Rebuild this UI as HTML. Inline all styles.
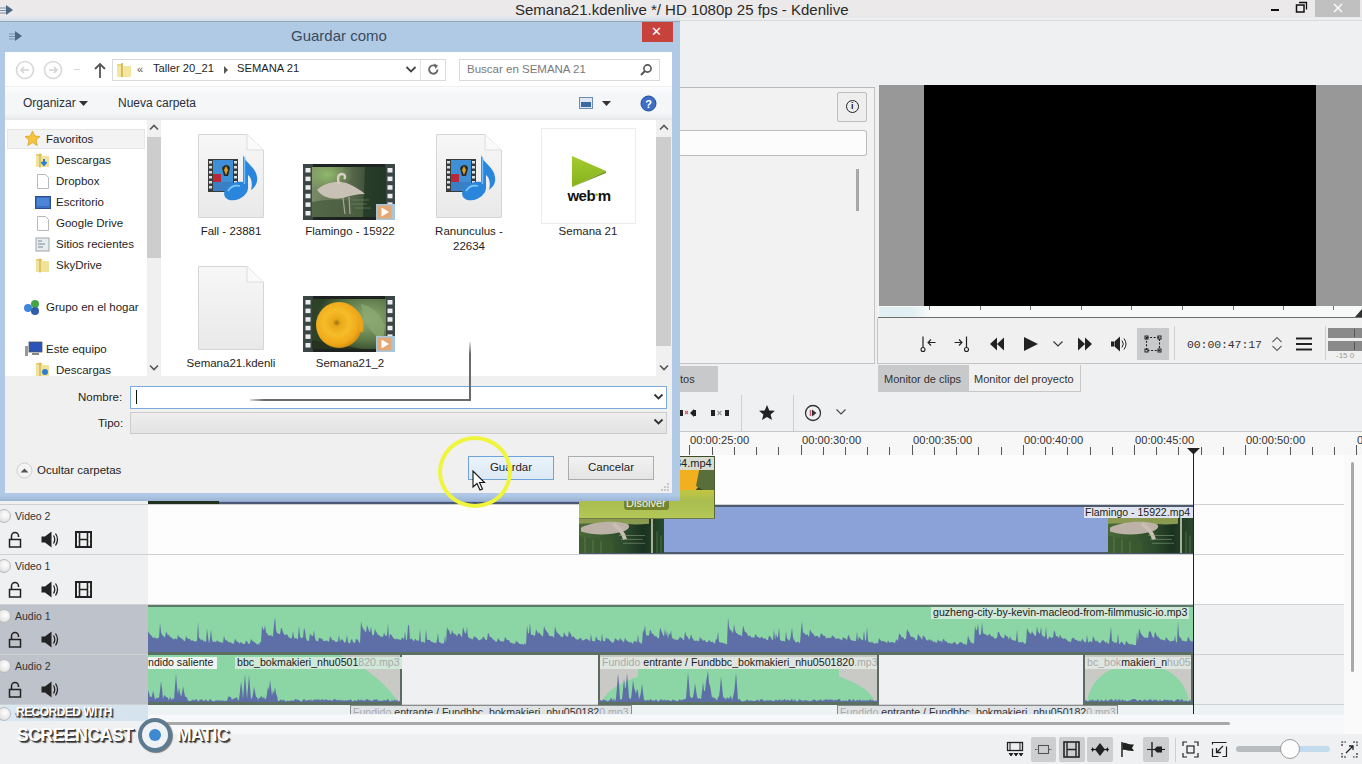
<!DOCTYPE html>
<html><head><meta charset="utf-8">
<style>
*{margin:0;padding:0;box-sizing:border-box}
html,body{width:1362px;height:764px;overflow:hidden;background:#eff0f1;font-family:"Liberation Sans",sans-serif;color:#222;position:relative}
.a{position:absolute}
.t{position:absolute;white-space:nowrap;line-height:1}
</style></head><body>

<!-- App title bar -->
<div class="a" style="left:0;top:0;width:1362px;height:21px;background:linear-gradient(#ebe9e9 16px,#e4e6e8 17px,#eceeef 18px,#eceeef 20px,#d8dadc 20px)"></div>
<div class="a" style="left:0;top:16px;width:680px;height:5px;background:linear-gradient(#e6eaee,#d2dce6)"></div>
<div class="t" style="left:515px;top:1.5px;font-size:15px;color:#2a2a2a">Semana21.kdenlive */ HD 1080p 25 fps - Kdenlive</div>
<!-- window controls -->
<div class="a" style="left:1271px;top:9px;width:8px;height:2px;background:#111"></div>
<svg class="a" style="left:1295px;top:1px" width="13" height="12" viewBox="0 0 13 12"><path d="M4 1.5H11.5V8.5" fill="none" stroke="#111" stroke-width="1.3"/><rect x="1.5" y="4" width="7.5" height="7" fill="#ebe9e9" stroke="#111" stroke-width="1.5"/></svg>
<div class="a" style="left:1315px;top:0;width:45px;height:17px;background:#c0c0c0"></div>
<svg class="a" style="left:1333px;top:3px" width="10" height="10"><path d="M1 1L9 9M9 1L1 9" stroke="#fff" stroke-width="1.3"/></svg>

<!-- ===== Kdenlive main ===== -->
<!-- left panel (project bin) -->
<div class="a" style="left:680px;top:87px;width:195px;height:277px;background:#f2f2f2;border-top:1px solid #b9b9b9;border-right:1px solid #c4c4c4;border-bottom:1px solid #c4c4c4"></div>
<div class="a" style="left:837px;top:92px;width:30px;height:30px;background:#eeeeee;border:1px solid #bdbdbd;border-radius:2px"></div>
<div class="a" style="left:846px;top:100px;width:13px;height:13px;border:1.3px solid #222;border-radius:50%"></div>
<div class="t" style="left:851px;top:102px;font-size:9px;font-weight:bold;color:#222">i</div>
<div class="a" style="left:680px;top:130px;width:187px;height:26px;background:#fcfcfc;border:1px solid #bcbcbc;border-left:none;border-radius:0 3px 3px 0"></div>
<div class="a" style="left:856px;top:169px;width:3px;height:42px;background:#a8a8a8"></div>

<!-- monitor -->
<div class="a" style="left:879px;top:85px;width:483px;height:221px;background:#989898"></div>
<div class="a" style="left:924px;top:85px;width:392px;height:221px;background:#000"></div>
<div class="a" style="left:878px;top:306px;width:484px;height:12px;background:#f7f8f8;border-bottom:1.5px solid #6e6e6e"></div>
<div class="a" style="left:879px;top:307px;width:48px;height:10px;background:linear-gradient(90deg,#e4eff2,#e0f0f3 70%,#f7f8f8)"></div>
<div class="a" style="left:877px;top:318px;width:485px;height:46px;background:#f0f0f0;border-left:1px solid #c4c4c4;border-bottom:1px solid #c4c4c4"></div>
<div class="a" style="left:929px;top:306px;width:1px;height:4px;background:#777"></div><div class="a" style="left:980px;top:306px;width:1px;height:4px;background:#777"></div><div class="a" style="left:1030px;top:306px;width:1px;height:4px;background:#777"></div><div class="a" style="left:1081px;top:306px;width:1px;height:4px;background:#777"></div><div class="a" style="left:1131px;top:306px;width:1px;height:4px;background:#777"></div><div class="a" style="left:1182px;top:306px;width:1px;height:4px;background:#777"></div><div class="a" style="left:1233px;top:306px;width:1px;height:4px;background:#777"></div><div class="a" style="left:1283px;top:306px;width:1px;height:4px;background:#777"></div><div class="a" style="left:1333px;top:306px;width:1px;height:4px;background:#777"></div>
<svg class="a" style="left:1355px;top:309px" width="7" height="8"><path d="M7 0V8H0z" fill="#333"/></svg>
<!-- monitor controls -->
<svg class="a" style="left:918px;top:334px" width="20" height="20" viewBox="0 0 20 20"><path d="M5 2.5V13.5" stroke="#222" stroke-width="1.2"/><circle cx="5" cy="15.5" r="2" fill="none" stroke="#222" stroke-width="1.1"/><path d="M17.5 8.5H10M13 5.5L10 8.5L13 11.5" fill="none" stroke="#222" stroke-width="1.1"/></svg>
<svg class="a" style="left:952px;top:334px" width="20" height="20" viewBox="0 0 20 20"><path d="M14.5 2.5V13.5" stroke="#222" stroke-width="1.2"/><circle cx="14.5" cy="15.5" r="2" fill="none" stroke="#222" stroke-width="1.1"/><path d="M2.5 8.5H10M7 5.5L10 8.5L7 11.5" fill="none" stroke="#222" stroke-width="1.1"/></svg>
<svg class="a" style="left:989px;top:336px" width="16" height="16" viewBox="0 0 16 16"><path d="M8 1.5L1 8L8 14.5zM15 1.5L8 8L15 14.5z" fill="#222"/></svg>
<svg class="a" style="left:1023px;top:336px" width="16" height="16" viewBox="0 0 16 16"><path d="M1 1V15L15 8z" fill="#222"/></svg>
<svg class="a" style="left:1052px;top:340px" width="12" height="8" viewBox="0 0 12 8"><path d="M1.5 1.5L6 6L10.5 1.5" fill="none" stroke="#333" stroke-width="1.1"/></svg>
<svg class="a" style="left:1077px;top:336px" width="16" height="16" viewBox="0 0 16 16"><path d="M1 1.5L8 8L1 14.5zM8 1.5L15 8L8 14.5z" fill="#222"/></svg>
<svg class="a" style="left:1110px;top:335px" width="18" height="18" viewBox="0 0 18 18"><path d="M1 6.5H4V11.5H1z" fill="#222"/><path d="M4.5 6.5L10 1.5V16.5L4.5 11.5z" fill="#222"/><path d="M12 5.5Q14.5 9 12 12.5M14 3.5Q18 9 14 14.5" fill="none" stroke="#222" stroke-width="1"/></svg>
<div class="a" style="left:1137px;top:328px;width:32px;height:32px;background:#c9cacb"></div>
<svg class="a" style="left:1144px;top:335px" width="18" height="18" viewBox="0 0 18 18"><rect x="2.5" y="2.5" width="13" height="13" fill="none" stroke="#222" stroke-width="1.1" stroke-dasharray="2 1.6"/><g fill="none" stroke="#222" stroke-width="1"><rect x="1" y="1" width="3" height="3"/><rect x="14" y="1" width="3" height="3"/><rect x="1" y="14" width="3" height="3"/><rect x="14" y="14" width="3" height="3"/></g></svg>
<div class="a" style="left:1174px;top:326px;width:1px;height:34px;background:#cfcfcf"></div>
<div class="t" style="left:1187px;top:339px;font-size:11.5px;font-family:'Liberation Mono',monospace;color:#333;letter-spacing:-0.1px">00:00:47:17</div>
<svg class="a" style="left:1271px;top:335px" width="12" height="18" viewBox="0 0 12 18"><path d="M1.5 7L6 2.5L10.5 7M1.5 11L6 15.5L10.5 11" fill="none" stroke="#666" stroke-width="1.1"/></svg>
<svg class="a" style="left:1295px;top:337px" width="18" height="14" viewBox="0 0 18 14"><path d="M1 1.5H17M1 7H17M1 12.5H17" stroke="#222" stroke-width="2"/></svg>
<div class="a" style="left:1325px;top:326px;width:1px;height:34px;background:#cfcfcf"></div>
<div class="a" style="left:1328px;top:328px;width:34px;height:10px;background:#8a8a8a"></div>
<div class="a" style="left:1328px;top:341px;width:34px;height:10px;background:#8a8a8a"></div>
<div class="a" style="left:1354px;top:329px;width:1px;height:8px;background:#555"></div>
<div class="a" style="left:1354px;top:342px;width:1px;height:8px;background:#555"></div>
<div class="t" style="left:1336px;top:352px;font-size:8px;color:#999">-15 0</div>



<!-- tabs -->
<div class="a" style="left:878px;top:365px;width:90px;height:27px;background:#c8c9ca"></div>
<div class="t" style="left:884px;top:374px;font-size:11px;color:#333">Monitor de clips</div>
<div class="a" style="left:968px;top:365px;width:113px;height:27px;background:#f0f0f0;border:1px solid #c8c8c8;border-top:none"></div>
<div class="t" style="left:974px;top:374px;font-size:11px;color:#333">Monitor del proyecto</div>
<div class="a" style="left:672px;top:366px;width:46px;height:26px;background:#c8c9ca"></div>
<div class="t" style="left:680px;top:374px;font-size:11px;color:#333">tos</div>

<!-- timeline toolbar -->
<div class="a" style="left:680px;top:431px;width:682px;height:1px;background:#c9c9c9"></div>
<div class="a" style="left:741px;top:395px;width:1px;height:36px;background:#d0d0d0"></div>
<div class="a" style="left:793px;top:395px;width:1px;height:36px;background:#d0d0d0"></div>

<!-- ruler -->
<div class="a" style="left:148px;top:432px;width:1214px;height:23px;background:#f7f7f7"></div>

<!-- timeline toolbar icons -->
<svg class="a" style="left:680px;top:406px" width="20" height="14" viewBox="0 0 20 14"><path d="M0 4h3v6H0z" fill="#222"/><path d="M5 5L8 8M8 5L5 8" stroke="#d05a6a" stroke-width="1.1"/><path d="M10 7L14 3V11z" fill="#222"/><path d="M13 4h3v6h-3z" fill="#222"/></svg>
<svg class="a" style="left:710px;top:406px" width="20" height="14" viewBox="0 0 20 14"><path d="M1 4h4v6H1zM15 4h4v6h-4z" fill="#222"/><path d="M7.5 5L11.5 9M11.5 5L7.5 9" stroke="#999" stroke-width="1.1"/></svg>
<svg class="a" style="left:758px;top:404px" width="18" height="18" viewBox="0 0 18 18"><path d="M9 1L11.3 6.5L17 6.8L12.6 10.4L14 16L9 12.9L4 16L5.4 10.4L1 6.8L6.7 6.5z" fill="#222"/></svg>
<svg class="a" style="left:804px;top:404px" width="18" height="18" viewBox="0 0 18 18"><circle cx="9" cy="9" r="7.5" fill="none" stroke="#333" stroke-width="1.3"/><path d="M6.5 6V12" stroke="#d05a7a" stroke-width="1.6"/><path d="M8 5.5L12.5 9L8 12.5z" fill="#333"/></svg>
<svg class="a" style="left:835px;top:408px" width="12" height="8" viewBox="0 0 12 8"><path d="M1.5 1.5L6 6L10.5 1.5" fill="none" stroke="#444" stroke-width="1.1"/></svg>
<div class="t" style="left:690px;top:435px;font-size:11.2px;color:#333">00:00:25:00</div><div class="t" style="left:802px;top:435px;font-size:11.2px;color:#333">00:00:30:00</div><div class="t" style="left:913px;top:435px;font-size:11.2px;color:#333">00:00:35:00</div><div class="t" style="left:1024px;top:435px;font-size:11.2px;color:#333">00:00:40:00</div><div class="t" style="left:1135px;top:435px;font-size:11.2px;color:#333">00:00:45:00</div><div class="t" style="left:1246px;top:435px;font-size:11.2px;color:#333">00:00:50:00</div><div class="t" style="left:1357px;top:435px;font-size:11.2px;color:#333">00:00:55:00</div><div class="a" style="left:156px;top:447px;width:1px;height:8px;background:#555"></div><div class="a" style="left:178px;top:447px;width:1px;height:8px;background:#555"></div><div class="a" style="left:200px;top:447px;width:1px;height:8px;background:#555"></div><div class="a" style="left:223px;top:447px;width:1px;height:8px;background:#555"></div><div class="a" style="left:245px;top:445px;width:1px;height:10px;background:#555"></div><div class="a" style="left:267px;top:447px;width:1px;height:8px;background:#555"></div><div class="a" style="left:289px;top:447px;width:1px;height:8px;background:#555"></div><div class="a" style="left:311px;top:447px;width:1px;height:8px;background:#555"></div><div class="a" style="left:334px;top:447px;width:1px;height:8px;background:#555"></div><div class="a" style="left:356px;top:445px;width:1px;height:10px;background:#555"></div><div class="a" style="left:378px;top:447px;width:1px;height:8px;background:#555"></div><div class="a" style="left:400px;top:447px;width:1px;height:8px;background:#555"></div><div class="a" style="left:423px;top:447px;width:1px;height:8px;background:#555"></div><div class="a" style="left:445px;top:447px;width:1px;height:8px;background:#555"></div><div class="a" style="left:467px;top:445px;width:1px;height:10px;background:#555"></div><div class="a" style="left:489px;top:447px;width:1px;height:8px;background:#555"></div><div class="a" style="left:512px;top:447px;width:1px;height:8px;background:#555"></div><div class="a" style="left:534px;top:447px;width:1px;height:8px;background:#555"></div><div class="a" style="left:556px;top:447px;width:1px;height:8px;background:#555"></div><div class="a" style="left:578px;top:445px;width:1px;height:10px;background:#555"></div><div class="a" style="left:600px;top:447px;width:1px;height:8px;background:#555"></div><div class="a" style="left:623px;top:447px;width:1px;height:8px;background:#555"></div><div class="a" style="left:645px;top:447px;width:1px;height:8px;background:#555"></div><div class="a" style="left:667px;top:447px;width:1px;height:8px;background:#555"></div><div class="a" style="left:689px;top:445px;width:1px;height:10px;background:#555"></div><div class="a" style="left:712px;top:447px;width:1px;height:8px;background:#555"></div><div class="a" style="left:734px;top:447px;width:1px;height:8px;background:#555"></div><div class="a" style="left:756px;top:447px;width:1px;height:8px;background:#555"></div><div class="a" style="left:778px;top:447px;width:1px;height:8px;background:#555"></div><div class="a" style="left:801px;top:445px;width:1px;height:10px;background:#555"></div><div class="a" style="left:823px;top:447px;width:1px;height:8px;background:#555"></div><div class="a" style="left:845px;top:447px;width:1px;height:8px;background:#555"></div><div class="a" style="left:867px;top:447px;width:1px;height:8px;background:#555"></div><div class="a" style="left:889px;top:447px;width:1px;height:8px;background:#555"></div><div class="a" style="left:912px;top:445px;width:1px;height:10px;background:#555"></div><div class="a" style="left:934px;top:447px;width:1px;height:8px;background:#555"></div><div class="a" style="left:956px;top:447px;width:1px;height:8px;background:#555"></div><div class="a" style="left:978px;top:447px;width:1px;height:8px;background:#555"></div><div class="a" style="left:1001px;top:447px;width:1px;height:8px;background:#555"></div><div class="a" style="left:1023px;top:445px;width:1px;height:10px;background:#555"></div><div class="a" style="left:1045px;top:447px;width:1px;height:8px;background:#555"></div><div class="a" style="left:1067px;top:447px;width:1px;height:8px;background:#555"></div><div class="a" style="left:1090px;top:447px;width:1px;height:8px;background:#555"></div><div class="a" style="left:1112px;top:447px;width:1px;height:8px;background:#555"></div><div class="a" style="left:1134px;top:445px;width:1px;height:10px;background:#555"></div><div class="a" style="left:1156px;top:447px;width:1px;height:8px;background:#555"></div><div class="a" style="left:1178px;top:447px;width:1px;height:8px;background:#555"></div><div class="a" style="left:1201px;top:447px;width:1px;height:8px;background:#555"></div><div class="a" style="left:1223px;top:447px;width:1px;height:8px;background:#555"></div><div class="a" style="left:1245px;top:445px;width:1px;height:10px;background:#555"></div><div class="a" style="left:1267px;top:447px;width:1px;height:8px;background:#555"></div><div class="a" style="left:1290px;top:447px;width:1px;height:8px;background:#555"></div><div class="a" style="left:1312px;top:447px;width:1px;height:8px;background:#555"></div><div class="a" style="left:1334px;top:447px;width:1px;height:8px;background:#555"></div><div class="a" style="left:1356px;top:445px;width:1px;height:10px;background:#555"></div>

<!-- tracks -->
<div class="a" style="left:0;top:455px;width:148px;height:150px;background:#eff0f1"></div>
<div class="a" style="left:0;top:605px;width:148px;height:100px;background:#bec2ca"></div>
<div class="a" style="left:0;top:705px;width:148px;height:16px;background:linear-gradient(90deg,#dbe8f2,#d4e3ee)"></div>
<div class="a" style="left:148px;top:455px;width:1196px;height:150px;background:#fdfdfd"></div>
<div class="a" style="left:148px;top:605px;width:1196px;height:100px;background:#eef0f1"></div>
<div class="a" style="left:148px;top:705px;width:1196px;height:10px;background:#edf2f4"></div>
<div class="a" style="left:148px;top:715px;width:1196px;height:19px;background:#f7f8f9"></div>
<div class="a" style="left:1344px;top:455px;width:18px;height:279px;background:#fafafa"></div>
<div class="a" style="left:0;top:504px;width:1344px;height:1px;background:#cfd0d2"></div>
<div class="a" style="left:0;top:554px;width:1344px;height:1px;background:#cfd0d2"></div>
<div class="a" style="left:0;top:604px;width:1344px;height:1px;background:#cfd0d2"></div>
<div class="a" style="left:0;top:654px;width:1344px;height:1px;background:#cfd0d2"></div>
<div class="a" style="left:0;top:704px;width:1344px;height:1px;background:#cfd0d2"></div>
<div class="a" style="left:-3px;top:509px;width:14px;height:14px;border-radius:50%;background:radial-gradient(circle at 60% 40%,#ffffff,#e6e6e6 60%,#c8c8c8);border:1px solid #bbb"></div>
<div class="t" style="left:15px;top:511px;font-size:10.5px;color:#333">Video 2</div>
<svg class="a" style="left:8px;top:531px" width="14" height="17" viewBox="0 0 14 17"><path d="M3.5 8.5V5A3.5 3.5 0 0 1 10.5 5V6" fill="none" stroke="#222" stroke-width="1.5"/><rect x="1.5" y="8.5" width="11" height="7.5" fill="none" stroke="#222" stroke-width="1.5"/></svg>
<svg class="a" style="left:41px;top:531px" width="18" height="17" viewBox="0 0 18 17"><path d="M0.5 5.5H4V11.5H0.5z" fill="#222"/><path d="M4 5.5L10.5 0.5V16.5L4 11.5z" fill="#222"/><path d="M12.5 4.5Q15 8.5 12.5 12.5M14.5 2.5Q18.5 8.5 14.5 14.5" fill="none" stroke="#222" stroke-width="1.3"/></svg>
<svg class="a" style="left:75px;top:531px" width="17" height="17" viewBox="0 0 17 17"><rect x="1" y="1" width="15" height="15" fill="none" stroke="#222" stroke-width="2"/><path d="M4.5 1.5V15.5M12.5 1.5V15.5M4.5 8.5H12.5" stroke="#222" stroke-width="1.6"/><g fill="#fff"><rect x="2" y="3" width="1.3" height="1.5"/><rect x="2" y="7.5" width="1.3" height="1.5"/><rect x="2" y="12" width="1.3" height="1.5"/><rect x="13.8" y="3" width="1.3" height="1.5"/><rect x="13.8" y="7.5" width="1.3" height="1.5"/><rect x="13.8" y="12" width="1.3" height="1.5"/></g></svg>
<div class="a" style="left:-3px;top:559px;width:14px;height:14px;border-radius:50%;background:radial-gradient(circle at 60% 40%,#ffffff,#e6e6e6 60%,#c8c8c8);border:1px solid #bbb"></div>
<div class="t" style="left:15px;top:561px;font-size:10.5px;color:#333">Video 1</div>
<svg class="a" style="left:8px;top:581px" width="14" height="17" viewBox="0 0 14 17"><path d="M3.5 8.5V5A3.5 3.5 0 0 1 10.5 5V6" fill="none" stroke="#222" stroke-width="1.5"/><rect x="1.5" y="8.5" width="11" height="7.5" fill="none" stroke="#222" stroke-width="1.5"/></svg>
<svg class="a" style="left:41px;top:581px" width="18" height="17" viewBox="0 0 18 17"><path d="M0.5 5.5H4V11.5H0.5z" fill="#222"/><path d="M4 5.5L10.5 0.5V16.5L4 11.5z" fill="#222"/><path d="M12.5 4.5Q15 8.5 12.5 12.5M14.5 2.5Q18.5 8.5 14.5 14.5" fill="none" stroke="#222" stroke-width="1.3"/></svg>
<svg class="a" style="left:75px;top:581px" width="17" height="17" viewBox="0 0 17 17"><rect x="1" y="1" width="15" height="15" fill="none" stroke="#222" stroke-width="2"/><path d="M4.5 1.5V15.5M12.5 1.5V15.5M4.5 8.5H12.5" stroke="#222" stroke-width="1.6"/><g fill="#fff"><rect x="2" y="3" width="1.3" height="1.5"/><rect x="2" y="7.5" width="1.3" height="1.5"/><rect x="2" y="12" width="1.3" height="1.5"/><rect x="13.8" y="3" width="1.3" height="1.5"/><rect x="13.8" y="7.5" width="1.3" height="1.5"/><rect x="13.8" y="12" width="1.3" height="1.5"/></g></svg>
<div class="a" style="left:-3px;top:609px;width:14px;height:14px;border-radius:50%;background:radial-gradient(circle at 60% 40%,#ffffff,#e6e6e6 60%,#c8c8c8);border:1px solid #bbb"></div>
<div class="t" style="left:15px;top:611px;font-size:10.5px;color:#333">Audio 1</div>
<svg class="a" style="left:8px;top:631px" width="14" height="17" viewBox="0 0 14 17"><path d="M3.5 8.5V5A3.5 3.5 0 0 1 10.5 5V6" fill="none" stroke="#222" stroke-width="1.5"/><rect x="1.5" y="8.5" width="11" height="7.5" fill="none" stroke="#222" stroke-width="1.5"/></svg>
<svg class="a" style="left:41px;top:631px" width="18" height="17" viewBox="0 0 18 17"><path d="M0.5 5.5H4V11.5H0.5z" fill="#222"/><path d="M4 5.5L10.5 0.5V16.5L4 11.5z" fill="#222"/><path d="M12.5 4.5Q15 8.5 12.5 12.5M14.5 2.5Q18.5 8.5 14.5 14.5" fill="none" stroke="#222" stroke-width="1.3"/></svg>
<div class="a" style="left:-3px;top:659px;width:14px;height:14px;border-radius:50%;background:radial-gradient(circle at 60% 40%,#ffffff,#e6e6e6 60%,#c8c8c8);border:1px solid #bbb"></div>
<div class="t" style="left:15px;top:661px;font-size:10.5px;color:#333">Audio 2</div>
<svg class="a" style="left:8px;top:681px" width="14" height="17" viewBox="0 0 14 17"><path d="M3.5 8.5V5A3.5 3.5 0 0 1 10.5 5V6" fill="none" stroke="#222" stroke-width="1.5"/><rect x="1.5" y="8.5" width="11" height="7.5" fill="none" stroke="#222" stroke-width="1.5"/></svg>
<svg class="a" style="left:41px;top:681px" width="18" height="17" viewBox="0 0 18 17"><path d="M0.5 5.5H4V11.5H0.5z" fill="#222"/><path d="M4 5.5L10.5 0.5V16.5L4 11.5z" fill="#222"/><path d="M12.5 4.5Q15 8.5 12.5 12.5M14.5 2.5Q18.5 8.5 14.5 14.5" fill="none" stroke="#222" stroke-width="1.3"/></svg>
<div class="a" style="left:-3px;top:707px;width:14px;height:14px;border-radius:50%;background:radial-gradient(circle at 60% 40%,#ffffff,#e6e6e6 60%,#c8c8c8);border:1px solid #bbb"></div>
<div class="t" style="left:15px;top:712px;font-size:10.5px;color:#777;height:6px;overflow:hidden">Video</div>
<div class="a" style="left:148px;top:456px;width:566px;height:48px;background:#8fa5d5;border-bottom:2px solid #4a5872"></div>
<div class="a" style="left:148px;top:456px;width:71px;height:48px;background:#22301f"></div>
<svg class="a" style="left:630px;top:456px" width="84" height="48" viewBox="0 0 84 48" preserveAspectRatio="none"><rect width="84" height="48" fill="#3d4a2a"/><path d="M40 0H84V48H30z" fill="#3b4b24"/><circle cx="55" cy="22" r="16" fill="#f2b020"/><path d="M70 10L84 4V40L66 30z" fill="#5a6e3a"/></svg>
<div class="t" style="left:672px;top:457px;height:13px;padding:1px 2px 0 3px;font-size:11px;color:#222;background:#d8dcd2">34.mp4</div>
<div class="a" style="left:714px;top:456px;width:1px;height:48px;background:#4a5a3a"></div>
<div class="a" style="left:579px;top:505px;width:614px;height:49px;background:#8ba2d8;border-top:2px solid #4e5a6e;border-bottom:2px solid #4e5a6e"></div>
<svg class="a" style="left:579px;top:518px" width="85" height="35" viewBox="0 0 85 36" preserveAspectRatio="none"><defs><linearGradient id="vt579" x1="0" y1="0" x2="1" y2="0"><stop offset="0" stop-color="#4a6a3a"/><stop offset="0.55" stop-color="#2c4a2c"/><stop offset="0.75" stop-color="#1a3220"/><stop offset="1" stop-color="#2a4a2c"/></linearGradient></defs><rect width="85" height="36" fill="url(#vt579)"/><path d="M0 0H70V6C50 8 30 4 0 6z" fill="#8a9a50"/><path d="M2 10C12 4 34 2 48 6C52 8 50 12 44 14C30 18 14 18 2 14z" fill="#bcb2a8"/><path d="M34 6C40 10 44 14 46 22" stroke="#c8beb2" stroke-width="4" fill="none"/><path d="M0 18C10 22 20 20 34 24V36H0z" fill="#3c5a30" opacity="0.8"/><g stroke="#a4b494" stroke-width="0.8" opacity="0.6"><path d="M40 18H66M42 22H64M44 26H66"/></g><path d="M73 0V36" stroke="#b8c0a0" stroke-width="1.8"/><g stroke="#7a9a6a" stroke-width="0.7" opacity="0.7"><path d="M6 20V36M14 22V36M22 24V36M78 14V36M82 18V36"/></g></svg>
<svg class="a" style="left:1108px;top:518px" width="85" height="35" viewBox="0 0 85 36" preserveAspectRatio="none"><defs><linearGradient id="vt1108" x1="0" y1="0" x2="1" y2="0"><stop offset="0" stop-color="#4a6a3a"/><stop offset="0.55" stop-color="#2c4a2c"/><stop offset="0.75" stop-color="#1a3220"/><stop offset="1" stop-color="#2a4a2c"/></linearGradient></defs><rect width="85" height="36" fill="url(#vt1108)"/><path d="M0 0H70V6C50 8 30 4 0 6z" fill="#8a9a50"/><path d="M2 10C12 4 34 2 48 6C52 8 50 12 44 14C30 18 14 18 2 14z" fill="#bcb2a8"/><path d="M34 6C40 10 44 14 46 22" stroke="#c8beb2" stroke-width="4" fill="none"/><path d="M0 18C10 22 20 20 34 24V36H0z" fill="#3c5a30" opacity="0.8"/><g stroke="#a4b494" stroke-width="0.8" opacity="0.6"><path d="M40 18H66M42 22H64M44 26H66"/></g><path d="M73 0V36" stroke="#b8c0a0" stroke-width="1.8"/><g stroke="#7a9a6a" stroke-width="0.7" opacity="0.7"><path d="M6 20V36M14 22V36M22 24V36M78 14V36M82 18V36"/></g></svg>
<div class="a" style="left:1084px;top:507px;width:109px;height:11px;background:#dfe4ee"></div><div class="t" style="left:1085px;top:507px;font-size:10.5px;color:#222">Flamingo - 15922.mp4</div>
<div class="a" style="left:579px;top:490px;width:136px;height:29px;background:linear-gradient(#c2c640,#a9bd50 40%,#b4c858);border-bottom:1px solid #6f7a4a;border-right:1px solid #5a6a3a"></div>
<div class="t" style="left:624px;top:497px;height:13px;padding:1px 3px 0 2px;font-size:11px;color:#f4f4e8;background:#75852e;border-radius:0 0 3px 3px">Disolver</div>
<div class="a" style="left:148px;top:605px;width:1045px;height:50px;background:#8cd5a5;border-top:2px solid #5c7a6a"></div>
<svg class="a" style="left:148px;top:607px" width="1045" height="48"><path d="M0 46.0 L0 24.3 L1 26.0 L2 27.5 L3 28.3 L4 29.4 L5 31.0 L6 30.4 L7 30.2 L8 31.7 L9 31.2 L10 31.1 L11 30.8 L12 15.8 L13 25.2 L14 27.5 L15 29.3 L16 29.2 L17 30.8 L18 24.9 L19 26.0 L20 28.6 L21 27.8 L22 30.2 L23 29.7 L24 31.2 L25 31.8 L26 32.6 L27 31.5 L28 31.6 L29 32.8 L30 27.3 L31 30.6 L32 29.8 L33 31.6 L34 31.7 L35 32.4 L36 33.9 L37 34.2 L38 28.7 L39 30.9 L40 31.4 L41 32.3 L42 31.8 L43 33.9 L44 33.0 L45 33.8 L46 34.3 L47 34.6 L48 34.0 L49 34.5 L50 14.5 L51 31.5 L52 30.9 L53 33.7 L54 32.3 L55 33.1 L56 34.9 L57 33.6 L58 35.7 L59 21.2 L60 29.4 L61 36.4 L62 32.0 L63 22.1 L64 32.6 L65 35.1 L66 34.7 L67 34.5 L68 35.2 L69 33.1 L70 34.6 L71 34.4 L72 35.4 L73 34.7 L74 35.9 L75 35.4 L76 28.8 L77 32.6 L78 33.3 L79 33.8 L80 34.6 L81 35.7 L82 35.0 L83 35.4 L84 36.6 L85 36.6 L86 36.5 L87 31.4 L88 33.3 L89 34.9 L90 34.2 L91 36.5 L92 35.9 L93 35.1 L94 36.1 L95 36.9 L96 37.0 L97 36.7 L98 33.5 L99 34.6 L100 36.0 L101 37.3 L102 36.3 L103 31.8 L104 33.6 L105 34.6 L106 34.6 L107 36.1 L108 36.1 L109 38.0 L110 36.5 L111 38.1 L112 35.0 L113 35.0 L114 19.0 L115 22.1 L116 23.2 L117 17.9 L118 25.6 L119 26.1 L120 28.2 L121 28.6 L122 29.0 L123 27.5 L124 29.8 L125 28.7 L126 17.6 L127 10.0 L128 23.0 L129 26.0 L130 26.6 L131 26.8 L132 27.3 L133 21.0 L134 21.4 L135 25.4 L136 27.0 L137 28.2 L138 27.7 L139 26.9 L140 28.9 L141 30.5 L142 30.7 L143 31.7 L144 30.4 L145 23.9 L146 30.5 L147 32.0 L148 30.6 L149 32.6 L150 31.2 L151 18.7 L152 29.3 L153 31.1 L154 31.0 L155 30.6 L156 20.9 L157 23.4 L158 31.4 L159 33.4 L160 33.7 L161 34.0 L162 25.9 L163 28.6 L164 28.4 L165 29.4 L166 23.3 L167 30.9 L168 33.7 L169 34.1 L170 34.4 L171 30.8 L172 30.9 L173 31.7 L174 31.5 L175 33.4 L176 33.9 L177 34.1 L178 33.8 L179 33.2 L180 34.8 L181 34.6 L182 29.5 L183 30.6 L184 32.7 L185 33.6 L186 33.0 L187 34.4 L188 35.0 L189 34.9 L190 34.1 L191 27.7 L192 34.9 L193 32.4 L194 32.2 L195 33.2 L196 35.3 L197 35.8 L198 34.2 L199 27.5 L200 35.0 L201 36.3 L202 36.2 L203 32.8 L204 32.1 L205 35.0 L206 35.8 L207 36.1 L208 31.9 L209 32.2 L210 33.2 L211 35.0 L212 36.6 L213 14.2 L214 19.0 L215 21.3 L216 23.0 L217 23.9 L218 25.6 L219 18.1 L220 20.9 L221 23.9 L222 25.2 L223 19.5 L224 26.9 L225 28.8 L226 27.5 L227 21.7 L228 24.8 L229 26.1 L230 27.9 L231 28.0 L232 29.2 L233 30.1 L234 29.0 L235 30.4 L236 25.2 L237 28.3 L238 28.9 L239 28.3 L240 16.3 L241 31.9 L242 27.0 L243 27.4 L244 28.8 L245 30.5 L246 31.7 L247 31.9 L248 32.5 L249 31.0 L250 33.1 L251 31.8 L252 33.1 L253 32.7 L254 30.5 L255 31.3 L256 32.6 L257 24.6 L258 33.2 L259 32.6 L260 18.6 L261 17.9 L262 32.8 L263 31.6 L264 31.7 L265 33.2 L266 34.4 L267 31.4 L268 32.8 L269 33.7 L270 33.6 L271 33.7 L272 21.8 L273 35.6 L274 34.8 L275 34.5 L276 35.5 L277 35.8 L278 22.0 L279 32.7 L280 32.8 L281 32.9 L282 33.0 L283 35.0 L284 34.6 L285 35.6 L286 36.1 L287 35.6 L288 36.4 L289 33.2 L290 25.6 L291 35.4 L292 35.1 L293 36.2 L294 37.0 L295 35.6 L296 37.1 L297 28.3 L298 36.2 L299 20.0 L300 22.7 L301 23.0 L302 26.7 L303 27.8 L304 22.8 L305 26.0 L306 26.5 L307 27.4 L308 27.6 L309 29.8 L310 27.1 L311 26.5 L312 27.2 L313 29.3 L314 29.9 L315 20.1 L316 23.2 L317 26.2 L318 26.6 L319 20.1 L320 30.1 L321 30.6 L322 31.7 L323 31.2 L324 32.4 L325 32.1 L326 29.0 L327 30.1 L328 30.5 L329 30.7 L330 32.8 L331 33.0 L332 33.6 L333 31.9 L334 32.3 L335 29.6 L336 30.3 L337 32.2 L338 33.0 L339 33.1 L340 25.4 L341 27.5 L342 30.3 L343 29.9 L344 31.2 L345 32.5 L346 33.1 L347 33.7 L348 35.2 L349 34.3 L350 31.0 L351 32.6 L352 33.7 L353 34.6 L354 34.2 L355 34.5 L356 34.4 L357 30.0 L358 31.6 L359 33.0 L360 33.2 L361 32.9 L362 35.4 L363 35.8 L364 36.0 L365 36.7 L366 36.0 L367 37.4 L368 33.3 L369 34.9 L370 35.3 L371 36.6 L372 37.1 L373 37.3 L374 36.8 L375 38.0 L376 37.3 L377 36.1 L378 38.2 L379 18.2 L380 26.0 L381 26.5 L382 15.8 L383 27.7 L384 28.1 L385 27.4 L386 28.9 L387 28.8 L388 22.4 L389 24.2 L390 26.2 L391 25.5 L392 26.6 L393 28.1 L394 28.7 L395 29.8 L396 18.5 L397 22.2 L398 23.6 L399 24.7 L400 26.0 L401 28.4 L402 29.2 L403 29.0 L404 29.5 L405 29.3 L406 31.0 L407 19.3 L408 23.2 L409 25.4 L410 26.2 L411 27.4 L412 28.1 L413 30.3 L414 29.3 L415 30.8 L416 25.0 L417 27.4 L418 28.9 L419 29.2 L420 30.2 L421 23.7 L422 26.1 L423 27.2 L424 30.3 L425 29.2 L426 30.1 L427 30.9 L428 32.6 L429 31.9 L430 33.3 L431 31.4 L432 31.8 L433 30.8 L434 33.2 L435 33.6 L436 33.1 L437 32.6 L438 31.8 L439 31.8 L440 32.7 L441 33.4 L442 34.3 L443 27.1 L444 33.8 L445 34.0 L446 34.2 L447 34.6 L448 29.2 L449 31.3 L450 32.9 L451 33.1 L452 33.8 L453 34.7 L454 26.3 L455 34.1 L456 34.1 L457 34.6 L458 29.7 L459 31.9 L460 31.4 L461 32.2 L462 33.7 L463 34.5 L464 35.5 L465 35.8 L466 34.7 L467 31.3 L468 31.9 L469 33.0 L470 33.6 L471 33.8 L472 31.1 L473 32.4 L474 33.6 L475 34.6 L476 35.3 L477 30.5 L478 32.7 L479 33.9 L480 34.4 L481 35.0 L482 35.8 L483 34.5 L484 36.6 L485 36.6 L486 33.7 L487 34.7 L488 33.4 L489 36.2 L490 27.2 L491 34.9 L492 35.4 L493 36.8 L494 36.6 L495 23.1 L496 25.1 L497 17.7 L498 27.9 L499 28.4 L500 28.8 L501 28.2 L502 22.9 L503 23.8 L504 27.3 L505 26.2 L506 28.4 L507 29.8 L508 28.6 L509 30.4 L510 31.2 L511 31.5 L512 20.6 L513 23.1 L514 25.2 L515 28.0 L516 29.4 L517 21.5 L518 29.5 L519 24.1 L520 32.3 L521 26.0 L522 28.2 L523 23.3 L524 31.2 L525 31.3 L526 32.5 L527 32.6 L528 32.6 L529 33.3 L530 32.8 L531 31.8 L532 29.2 L533 30.9 L534 31.1 L535 32.5 L536 33.4 L537 24.5 L538 27.7 L539 29.4 L540 30.6 L541 32.7 L542 31.7 L543 27.1 L544 30.3 L545 31.7 L546 33.8 L547 33.7 L548 33.7 L549 33.4 L550 34.3 L551 34.3 L552 29.5 L553 32.2 L554 31.8 L555 34.2 L556 32.8 L557 33.6 L558 34.9 L559 35.2 L560 35.0 L561 32.4 L562 34.3 L563 35.0 L564 34.7 L565 34.8 L566 36.7 L567 36.0 L568 31.4 L569 33.0 L570 24.3 L571 35.1 L572 35.0 L573 36.0 L574 35.2 L575 35.9 L576 36.3 L577 36.6 L578 36.9 L579 37.8 L580 10.0 L581 19.6 L582 22.5 L583 23.6 L584 24.4 L585 26.7 L586 17.0 L587 23.1 L588 25.9 L589 26.1 L590 27.6 L591 28.0 L592 27.7 L593 28.5 L594 29.5 L595 18.6 L596 21.4 L597 25.0 L598 25.2 L599 26.6 L600 28.7 L601 29.2 L602 28.3 L603 30.1 L604 31.1 L605 29.7 L606 31.5 L607 27.9 L608 27.2 L609 29.9 L610 29.6 L611 30.8 L612 31.3 L613 30.2 L614 29.5 L615 31.5 L616 31.7 L617 31.0 L618 32.3 L619 32.9 L620 32.9 L621 28.6 L622 29.6 L623 30.6 L624 32.8 L625 32.9 L626 21.5 L627 32.9 L628 26.5 L629 30.5 L630 30.1 L631 20.4 L632 32.8 L633 33.6 L634 34.3 L635 34.0 L636 33.7 L637 35.0 L638 23.9 L639 31.6 L640 32.2 L641 33.9 L642 32.6 L643 27.7 L644 20.6 L645 30.8 L646 32.7 L647 34.3 L648 35.7 L649 35.1 L650 34.8 L651 35.0 L652 36.7 L653 22.8 L654 13.9 L655 26.0 L656 25.6 L657 27.2 L658 28.2 L659 27.1 L660 28.2 L661 30.3 L662 22.2 L663 24.5 L664 25.9 L665 26.6 L666 28.3 L667 29.6 L668 29.1 L669 28.9 L670 29.0 L671 30.9 L672 30.0 L673 25.9 L674 27.3 L675 28.3 L676 29.1 L677 28.8 L678 31.6 L679 31.0 L680 30.8 L681 30.7 L682 30.7 L683 31.3 L684 28.6 L685 28.8 L686 30.3 L687 30.6 L688 32.6 L689 31.5 L690 31.3 L691 31.4 L692 32.5 L693 32.5 L694 33.5 L695 29.7 L696 31.2 L697 31.3 L698 31.8 L699 33.4 L700 28.3 L701 28.6 L702 31.6 L703 33.0 L704 33.5 L705 33.8 L706 33.8 L707 34.0 L708 34.0 L709 24.2 L710 33.9 L711 29.3 L712 31.2 L713 32.3 L714 32.9 L715 33.6 L716 23.3 L717 33.6 L718 33.5 L719 19.8 L720 33.0 L721 35.4 L722 34.8 L723 36.0 L724 34.1 L725 36.2 L726 35.9 L727 36.9 L728 35.6 L729 36.6 L730 36.3 L731 31.2 L732 32.4 L733 33.8 L734 34.6 L735 33.7 L736 34.5 L737 34.8 L738 34.9 L739 36.4 L740 33.2 L741 34.9 L742 35.7 L743 34.9 L744 35.0 L745 35.3 L746 36.0 L747 36.0 L748 32.8 L749 32.5 L750 34.4 L751 26.5 L752 27.8 L753 28.5 L754 30.8 L755 29.7 L756 31.8 L757 32.5 L758 31.8 L759 22.1 L760 24.2 L761 25.1 L762 27.9 L763 29.8 L764 29.8 L765 30.2 L766 30.6 L767 32.0 L768 33.4 L769 32.9 L770 26.4 L771 28.7 L772 29.4 L773 30.9 L774 32.9 L775 28.3 L776 29.4 L777 30.1 L778 32.8 L779 33.0 L780 34.0 L781 31.9 L782 32.8 L783 33.7 L784 32.7 L785 35.3 L786 34.4 L787 34.6 L788 36.2 L789 35.3 L790 32.3 L791 34.3 L792 34.4 L793 33.5 L794 36.0 L795 32.2 L796 32.1 L797 34.4 L798 33.9 L799 35.0 L800 36.4 L801 35.9 L802 35.7 L803 37.1 L804 36.2 L805 36.5 L806 34.7 L807 34.9 L808 37.1 L809 37.4 L810 37.2 L811 36.3 L812 34.8 L813 35.2 L814 36.1 L815 36.1 L816 37.7 L817 36.2 L818 38.4 L819 36.7 L820 28.1 L821 31.9 L822 33.2 L823 36.3 L824 35.3 L825 37.1 L826 36.1 L827 18.8 L828 23.1 L829 22.9 L830 16.6 L831 27.2 L832 27.9 L833 27.1 L834 14.9 L835 25.2 L836 27.5 L837 26.5 L838 27.9 L839 28.3 L840 28.9 L841 26.7 L842 27.5 L843 28.8 L844 30.1 L845 29.3 L846 30.7 L847 31.9 L848 31.1 L849 30.9 L850 24.7 L851 25.3 L852 27.7 L853 29.4 L854 30.6 L855 30.9 L856 31.4 L857 27.0 L858 29.1 L859 29.2 L860 30.6 L861 32.8 L862 29.1 L863 31.6 L864 32.9 L865 33.3 L866 33.5 L867 33.4 L868 34.1 L869 22.3 L870 34.1 L871 36.1 L872 34.8 L873 35.4 L874 35.2 L875 34.4 L876 36.9 L877 36.3 L878 36.4 L879 20.7 L880 23.6 L881 25.6 L882 26.1 L883 27.6 L884 24.1 L885 26.2 L886 27.3 L887 29.2 L888 28.4 L889 19.3 L890 24.4 L891 25.9 L892 27.2 L893 19.7 L894 28.3 L895 29.8 L896 28.7 L897 30.7 L898 19.8 L899 31.5 L900 32.6 L901 30.0 L902 29.6 L903 31.1 L904 30.6 L905 30.8 L906 23.2 L907 24.9 L908 28.9 L909 29.6 L910 29.3 L911 31.7 L912 27.4 L913 29.7 L914 31.1 L915 31.7 L916 31.5 L917 31.3 L918 32.2 L919 32.8 L920 34.4 L921 34.3 L922 34.7 L923 35.0 L924 30.4 L925 31.5 L926 30.8 L927 32.7 L928 33.1 L929 32.8 L930 34.5 L931 33.9 L932 33.6 L933 35.0 L934 31.9 L935 32.4 L936 34.7 L937 35.0 L938 35.7 L939 27.5 L940 35.4 L941 35.1 L942 34.2 L943 34.4 L944 35.7 L945 29.2 L946 31.1 L947 33.4 L948 34.6 L949 33.6 L950 34.8 L951 35.8 L952 36.3 L953 35.2 L954 33.5 L955 32.9 L956 33.8 L957 35.0 L958 35.9 L959 34.6 L960 37.3 L961 36.2 L962 29.1 L963 19.5 L964 34.1 L965 34.0 L966 36.2 L967 35.1 L968 36.1 L969 35.7 L970 26.3 L971 36.7 L972 36.8 L973 34.8 L974 35.1 L975 36.2 L976 37.4 L977 37.9 L978 33.7 L979 34.7 L980 36.3 L981 36.7 L982 37.4 L983 37.3 L984 37.1 L985 37.7 L986 38.2 L987 38.1 L988 37.9 L989 24.8 L990 34.6 L991 21.7 L992 24.0 L993 26.8 L994 27.8 L995 29.4 L996 29.9 L997 31.2 L998 30.1 L999 31.1 L1000 31.0 L1001 24.5 L1002 24.2 L1003 25.3 L1004 28.9 L1005 30.3 L1006 31.2 L1007 24.4 L1008 26.8 L1009 29.5 L1010 29.2 L1011 31.1 L1012 31.4 L1013 32.9 L1014 32.2 L1015 33.1 L1016 32.9 L1017 34.1 L1018 29.9 L1019 31.3 L1020 32.9 L1021 33.2 L1022 34.8 L1023 34.0 L1024 34.1 L1025 33.4 L1026 34.0 L1027 28.3 L1028 35.5 L1029 35.1 L1030 14.2 L1031 28.5 L1032 30.7 L1033 31.1 L1034 33.7 L1035 34.0 L1036 33.5 L1037 34.7 L1038 34.1 L1039 34.6 L1040 29.6 L1041 31.6 L1042 33.3 L1043 34.9 L1044 33.6 L1045 35.3 L1045 46.0Z" fill="#5d6fa6"/><rect x="0" y="45" width="1045" height="3" fill="#5b7060"/></svg>
<div class="t" style="left:931px;top:607px;height:12px;padding:0 2px;font-size:10.6px;color:#222;background:#cfe8d8">guzheng-city-by-kevin-macleod-from-filmmusic-io.mp3</div>
<div class="a" style="left:148px;top:655px;width:254px;height:50px;background:#c9cac6;border-right:2px solid #5c6a62;border-left:2px solid #5c6a62"></div><svg class="a" style="left:148px;top:655px" width="254" height="50"><path d="M0 0H192Q234 20 252 50H0z" fill="#8cd5a5"/><path d="M0 48.0 L0 35.0 L1 38.3 L2 41.7 L3 42.1 L4 41.3 L5 35.8 L6 39.4 L7 44.5 L8 43.5 L9 42.4 L10 43.2 L11 42.6 L12 35.9 L13 26.0 L14 33.4 L15 44.3 L16 40.5 L17 40.3 L18 42.3 L19 42.1 L20 43.5 L21 45.6 L22 41.3 L23 44.2 L24 44.7 L25 42.5 L26 45.0 L27 31.6 L28 18.2 L29 31.4 L30 39.6 L31 32.7 L32 37.5 L33 41.5 L34 38.7 L35 31.1 L36 36.6 L37 41.1 L38 42.3 L39 42.5 L40 45.7 L41 45.9 L42 45.8 L43 46.3 L44 44.6 L45 45.5 L46 44.4 L47 45.5 L48 44.1 L49 44.4 L50 46.5 L51 46.0 L52 44.2 L53 45.3 L54 44.0 L55 45.5 L56 46.3 L57 44.9 L58 44.6 L59 45.8 L60 46.3 L61 45.7 L62 44.1 L63 44.6 L64 46.2 L65 45.9 L66 46.2 L67 46.4 L68 44.5 L69 46.1 L70 45.1 L71 45.4 L72 46.0 L73 44.7 L74 46.2 L75 44.9 L76 46.2 L77 45.4 L78 46.0 L79 45.8 L80 42.5 L81 40.9 L82 42.3 L83 42.2 L84 45.2 L85 43.5 L86 44.3 L87 42.8 L88 43.0 L89 42.1 L90 45.7 L91 44.2 L92 36.2 L93 26.5 L94 32.9 L95 43.9 L96 32.0 L97 18.9 L98 31.9 L99 44.1 L100 32.6 L101 19.9 L102 32.1 L103 44.2 L104 42.9 L105 38.9 L106 31.5 L107 36.4 L108 42.1 L109 42.0 L110 44.9 L111 42.8 L112 43.4 L113 40.5 L114 42.0 L115 43.6 L116 41.4 L117 44.6 L118 43.8 L119 39.0 L120 31.6 L121 35.3 L122 24.9 L123 32.2 L124 40.9 L125 35.2 L126 38.7 L127 31.9 L128 38.4 L129 40.7 L130 46.3 L131 45.9 L132 45.1 L133 44.4 L134 45.0 L135 45.8 L136 44.2 L137 46.0 L138 46.5 L139 45.8 L140 45.4 L141 46.3 L142 46.1 L143 45.6 L144 45.1 L145 46.2 L146 45.6 L147 44.3 L148 44.0 L149 44.9 L150 44.8 L151 45.0 L152 46.1 L153 46.4 L154 46.5 L155 44.2 L156 44.7 L157 44.1 L158 46.4 L159 44.9 L160 45.3 L161 44.7 L162 45.7 L163 44.0 L164 46.3 L165 45.1 L166 44.7 L167 44.2 L168 44.7 L169 44.7 L170 44.5 L171 44.2 L172 45.6 L173 44.8 L174 44.2 L175 44.3 L176 45.5 L177 44.5 L178 44.3 L179 45.1 L180 44.9 L181 45.5 L182 45.0 L183 45.0 L184 46.3 L185 44.9 L186 44.0 L187 44.3 L188 44.7 L189 45.5 L190 44.7 L191 45.0 L192 45.4 L193 44.4 L194 46.3 L195 44.6 L196 46.4 L197 45.0 L198 45.3 L199 45.9 L200 44.8 L201 45.3 L202 45.0 L203 44.2 L204 45.9 L205 46.5 L206 45.7 L207 44.8 L208 46.0 L209 46.1 L210 44.2 L211 44.9 L212 45.4 L213 44.3 L214 45.7 L215 44.8 L216 46.0 L217 45.4 L218 44.5 L219 44.2 L220 44.3 L221 45.5 L222 45.0 L223 45.7 L224 46.2 L225 45.3 L226 44.4 L227 44.4 L228 44.7 L229 44.1 L230 45.8 L231 46.1 L232 45.4 L233 45.8 L234 46.0 L235 45.5 L236 44.9 L237 45.3 L238 45.7 L239 44.4 L240 44.0 L241 45.4 L242 46.3 L243 46.4 L244 44.3 L245 46.4 L246 44.7 L247 45.1 L248 45.7 L249 44.5 L250 46.5 L251 46.2 L252 45.4 L253 46.4 L254 44.4 L254 48.0Z" fill="#5d6fa6"/><rect x="0" y="47" width="254" height="3" fill="#5b7060"/></svg>
<div class="t" style="left:148px;top:657px;height:12px;padding:0 4px 0 0;font-size:10.6px;color:#222;background:#eef4ef">ndido saliente</div>
<div class="t" style="left:235px;top:657px;height:12px;padding:0 2px;font-size:10.6px;color:#222;background:#cfe8d8">bbc_bokmakieri_nhu0501<span style="color:#aaa">820.mp3</span></div>
<div class="a" style="left:598px;top:655px;width:281px;height:50px;background:#c9cac6;border-right:2px solid #5c6a62;border-left:2px solid #5c6a62"></div><svg class="a" style="left:598px;top:655px" width="281" height="50"><ellipse cx="140.5" cy="50" rx="136.5" ry="42" fill="#8cd5a5"/><rect x="40" y="8" width="201" height="42" fill="#8cd5a5"/><path d="M0 48.0 L0 46.1 L1 44.8 L2 44.9 L3 45.3 L4 46.0 L5 44.5 L6 44.5 L7 45.2 L8 45.2 L9 45.9 L10 46.5 L11 45.6 L12 44.9 L13 42.6 L14 44.4 L15 45.8 L16 43.1 L17 46.4 L18 43.6 L19 31.8 L20 18.6 L21 28.5 L22 44.9 L23 44.1 L24 44.4 L25 34.4 L26 23.2 L27 34.0 L28 31.5 L29 18.1 L30 29.1 L31 42.3 L32 44.0 L33 43.7 L34 35.2 L35 24.7 L36 32.5 L37 35.2 L38 39.0 L39 33.7 L40 36.4 L41 44.3 L42 41.2 L43 37.1 L44 28.2 L45 37.1 L46 45.0 L47 44.7 L48 46.2 L49 45.3 L50 44.4 L51 46.0 L52 44.2 L53 44.3 L54 45.5 L55 45.6 L56 45.4 L57 45.5 L58 44.0 L59 45.5 L60 46.4 L61 46.3 L62 44.7 L63 44.0 L64 45.3 L65 45.3 L66 45.1 L67 44.6 L68 45.9 L69 45.0 L70 45.1 L71 44.9 L72 46.0 L73 46.1 L74 45.6 L75 44.2 L76 45.6 L77 45.0 L78 45.7 L79 46.2 L80 46.3 L81 44.5 L82 44.6 L83 45.6 L84 44.8 L85 44.8 L86 44.3 L87 44.1 L88 43.4 L89 31.1 L90 17.3 L91 27.9 L92 41.6 L93 42.2 L94 43.4 L95 42.0 L96 37.1 L97 28.3 L98 34.7 L99 41.5 L100 43.9 L101 43.1 L102 43.6 L103 44.2 L104 36.5 L105 27.1 L106 35.8 L107 36.3 L108 26.7 L109 21.4 L110 15.6 L111 28.1 L112 30.7 L113 36.8 L114 42.8 L115 41.5 L116 43.5 L117 42.7 L118 44.3 L119 45.8 L120 42.1 L121 41.6 L122 33.4 L123 21.4 L124 31.0 L125 41.1 L126 43.5 L127 42.5 L128 44.9 L129 42.5 L130 42.7 L131 44.0 L132 42.0 L133 41.1 L134 45.4 L135 41.8 L136 37.7 L137 29.2 L138 17.7 L139 30.3 L140 45.0 L141 44.1 L142 44.2 L143 46.2 L144 46.3 L145 46.3 L146 46.4 L147 45.4 L148 46.1 L149 44.3 L150 44.9 L151 46.2 L152 45.2 L153 45.7 L154 45.3 L155 46.0 L156 46.1 L157 46.0 L158 45.6 L159 44.7 L160 45.1 L161 46.4 L162 44.7 L163 44.3 L164 44.6 L165 44.5 L166 46.5 L167 45.3 L168 46.3 L169 44.6 L170 46.1 L171 44.7 L172 45.9 L173 44.8 L174 45.7 L175 46.4 L176 45.5 L177 45.7 L178 44.2 L179 45.8 L180 45.2 L181 45.1 L182 44.1 L183 46.3 L184 45.0 L185 45.2 L186 44.7 L187 44.1 L188 45.7 L189 44.8 L190 45.2 L191 45.1 L192 46.3 L193 44.5 L194 44.1 L195 45.6 L196 45.7 L197 44.0 L198 46.2 L199 46.3 L200 46.3 L201 44.5 L202 44.6 L203 45.4 L204 44.9 L205 46.5 L206 44.9 L207 45.4 L208 45.2 L209 45.5 L210 45.5 L211 45.9 L212 46.4 L213 45.4 L214 45.9 L215 44.7 L216 44.5 L217 44.7 L218 45.4 L219 45.9 L220 45.5 L221 45.3 L222 44.9 L223 44.1 L224 46.3 L225 45.3 L226 45.3 L227 44.7 L228 44.3 L229 44.6 L230 44.9 L231 44.6 L232 44.8 L233 44.4 L234 44.8 L235 44.8 L236 45.9 L237 44.2 L238 45.5 L239 45.0 L240 44.4 L241 44.1 L242 44.0 L243 46.5 L244 45.7 L245 45.7 L246 45.5 L247 46.1 L248 45.1 L249 46.3 L250 45.7 L251 44.1 L252 44.6 L253 45.3 L254 46.2 L255 44.1 L256 44.7 L257 46.0 L258 45.7 L259 44.9 L260 44.8 L261 45.8 L262 44.1 L263 45.7 L264 45.9 L265 44.4 L266 46.1 L267 44.8 L268 46.0 L269 45.0 L270 45.8 L271 45.6 L272 44.1 L273 45.3 L274 45.4 L275 45.0 L276 45.8 L277 46.1 L278 45.5 L279 45.8 L280 46.0 L281 44.1 L281 48.0Z" fill="#5d6fa6"/><rect x="0" y="47" width="281" height="3" fill="#5b7060"/></svg>
<div class="t" style="left:600px;top:657px;height:12px;padding:0 2px;font-size:10.6px;color:#222;background:#dfe6e0;width:277px;overflow:hidden"><span style="color:#aaa">Fundido</span> entrante / Fundbbc_bokmakieri_nhu0501820<span style="color:#aaa">.mp3</span></div>
<div class="a" style="left:1083px;top:655px;width:110px;height:50px;background:#c9cac6;border-right:2px solid #5c6a62;border-left:2px solid #5c6a62"></div><svg class="a" style="left:1083px;top:655px" width="110" height="50"><ellipse cx="55.0" cy="50" rx="51.0" ry="42" fill="#8cd5a5"/><rect x="40" y="8" width="30" height="42" fill="#8cd5a5"/><path d="M0 48.0 L0 46.5 L1 46.2 L2 45.5 L3 44.8 L4 46.2 L5 46.2 L6 45.9 L7 44.6 L8 46.1 L9 44.6 L10 44.8 L11 46.2 L12 45.2 L13 45.4 L14 45.5 L15 44.0 L16 46.3 L17 46.4 L18 44.2 L19 45.5 L20 46.0 L21 45.7 L22 45.6 L23 44.1 L24 46.0 L25 46.0 L26 45.0 L27 45.1 L28 44.1 L29 44.4 L30 45.6 L31 46.0 L32 44.4 L33 44.0 L34 46.4 L35 44.7 L36 44.3 L37 44.9 L38 46.0 L39 44.5 L40 44.7 L41 46.0 L42 44.9 L43 46.0 L44 46.4 L45 45.7 L46 45.7 L47 45.5 L48 44.9 L49 44.4 L50 44.1 L51 44.1 L52 44.0 L53 44.5 L54 45.7 L55 46.1 L56 44.9 L57 45.1 L58 44.8 L59 46.3 L60 46.0 L61 44.2 L62 45.0 L63 44.8 L64 46.3 L65 45.5 L66 44.2 L67 44.9 L68 44.0 L69 46.0 L70 45.4 L71 44.5 L72 45.4 L73 44.5 L74 45.1 L75 46.2 L76 46.3 L77 44.0 L78 46.2 L79 46.0 L80 45.7 L81 44.7 L82 44.4 L83 45.3 L84 45.3 L85 44.5 L86 45.8 L87 45.6 L88 45.0 L89 44.9 L90 46.4 L91 46.2 L92 46.2 L93 44.7 L94 44.8 L95 44.1 L96 44.6 L97 45.9 L98 44.6 L99 44.0 L100 45.6 L101 46.5 L102 45.6 L103 45.8 L104 46.1 L105 46.4 L106 46.2 L107 44.3 L108 46.4 L109 45.0 L110 46.0 L110 48.0Z" fill="#5d6fa6"/><rect x="0" y="47" width="110" height="3" fill="#5b7060"/></svg>
<div class="t" style="left:1085px;top:657px;height:12px;padding:0 2px;font-size:10.6px;color:#222;background:#dfe6e0;width:106px;overflow:hidden"><span style="color:#aaa">bc_bok</span>makieri_n<span style="color:#aaa">hu0501</span></div>
<div class="a" style="left:350px;top:705px;width:282px;height:9px;background:#dfe3e6;border:1px solid #8a8a8a;border-bottom:none;overflow:hidden"><div class="t" style="left:2px;top:1px;font-size:10.6px;color:#333"><span style="color:#aaa">Fundido</span> entrante / Fundbbc_bokmakieri_nhu050182<span style="color:#aaa">0.mp3</span></div></div>
<div class="a" style="left:837px;top:705px;width:281px;height:9px;background:#dfe3e6;border:1px solid #8a8a8a;border-bottom:none;overflow:hidden"><div class="t" style="left:2px;top:1px;font-size:10.6px;color:#333"><span style="color:#aaa">Fundido</span> entrante / Fundbbc_bokmakieri_nhu050182<span style="color:#aaa">0.mp3</span></div></div>
<div class="a" style="left:165px;top:722px;width:1065px;height:3px;background:#a9a9a9;border-radius:2px"></div>
<div class="a" style="left:1351px;top:462px;width:3px;height:210px;background:#a9a9a9;border-radius:2px"></div>
<svg class="a" style="left:1187px;top:448px" width="13" height="7"><path d="M0 0H13L6.5 6.5z" fill="#222"/></svg>
<div class="a" style="left:1193px;top:449px;width:1px;height:265px;background:#222"></div>
<div class="a" style="left:0;top:734px;width:1362px;height:30px;background:#eff0f1"></div>

<svg class="a" style="left:1006px;top:741px" width="18" height="18" viewBox="0 0 18 18"><rect x="1.5" y="1.5" width="15" height="8" fill="none" stroke="#222" stroke-width="1.3"/><path d="M4 1.5V9.5M14 1.5V9.5" stroke="#222" stroke-width="1"/><path d="M3 12L5 15L7 12M8 12L10 15L12 12M13 12L15 15L17 12" fill="#222" stroke="#222" stroke-width="1"/></svg>
<div class="a" style="left:1031px;top:737px;width:25px;height:25px;background:#cdcecf;border-radius:2px"></div>
<svg class="a" style="left:1034px;top:741px" width="19" height="17" viewBox="0 0 19 17"><rect x="4.5" y="4.5" width="10" height="8" fill="none" stroke="#555" stroke-width="1.1"/><path d="M1 8.5H4M15 8.5H18" stroke="#555" stroke-width="1.1" stroke-dasharray="1.5 1"/></svg>
<div class="a" style="left:1059px;top:737px;width:26px;height:25px;background:#cdcecf;border-radius:2px"></div>
<svg class="a" style="left:1063px;top:741px" width="17" height="17" viewBox="0 0 17 17"><rect x="1" y="1" width="15" height="15" fill="none" stroke="#222" stroke-width="1.6"/><path d="M4 1.5V15.5M13 1.5V15.5M4 8.5H13" stroke="#222" stroke-width="1.4"/></svg>
<div class="a" style="left:1087px;top:737px;width:26px;height:25px;background:#cdcecf;border-radius:2px"></div>
<svg class="a" style="left:1090px;top:741px" width="20" height="17" viewBox="0 0 20 17"><path d="M1 8.5H19" stroke="#222" stroke-width="1.2"/><path d="M10 2L15 8.5L10 15L5 8.5z" fill="#222"/><path d="M2 6L4.5 8.5L2 11M18 6L15.5 8.5L18 11" fill="#222"/></svg>
<svg class="a" style="left:1120px;top:741px" width="16" height="17" viewBox="0 0 16 17"><path d="M2 1V16" stroke="#222" stroke-width="1.5"/><path d="M2.5 2C6 1 8 4 14 3.5L12 7L14 10C8 10.5 6 8 2.5 9z" fill="#222"/></svg>
<div class="a" style="left:1143px;top:737px;width:26px;height:25px;background:#cdcecf;border-radius:2px"></div>
<svg class="a" style="left:1146px;top:741px" width="20" height="17" viewBox="0 0 20 17"><path d="M6 1V16" stroke="#222" stroke-width="1.4"/><path d="M1 8.5H19" stroke="#222" stroke-width="1.1"/><path d="M11 5.5L8 8.5L11 11.5H16V5.5z" fill="#222"/></svg>
<div class="a" style="left:1175px;top:738px;width:1px;height:24px;background:#cfcfcf"></div>
<svg class="a" style="left:1182px;top:741px" width="17" height="17" viewBox="0 0 17 17"><path d="M1 5V1H5M12 1H16V5M16 12V16H12M5 16H1V12" fill="none" stroke="#222" stroke-width="1.2"/><rect x="5" y="5" width="7" height="7" fill="none" stroke="#222" stroke-width="1.2"/></svg>
<svg class="a" style="left:1211px;top:741px" width="17" height="17" viewBox="0 0 17 17"><rect x="1.5" y="1.5" width="14" height="14" fill="none" stroke="#222" stroke-width="1.2" stroke-dasharray="14 4"/><path d="M12 5L5.5 11.5M5.5 7V11.5H10" fill="none" stroke="#222" stroke-width="1.3"/></svg>
<div class="a" style="left:1236px;top:746px;width:56px;height:6px;background:#b9bcbf;border-radius:3px 0 0 3px"></div>
<div class="a" style="left:1290px;top:746px;width:40px;height:6px;background:#c2dcee;border-radius:0 3px 3px 0"></div>
<div class="a" style="left:1280px;top:739px;width:20px;height:20px;border-radius:50%;background:#fcfcfc;border:1px solid #9a9a9a"></div>
<svg class="a" style="left:1341px;top:741px" width="17" height="17" viewBox="0 0 17 17"><path d="M1 5V1H5M12 1H16V5M16 12V16H12M5 16H1V12" fill="none" stroke="#222" stroke-width="1.2" stroke-dasharray="2 1.2"/><path d="M5 12L12 5M8 5H12V9" fill="none" stroke="#222" stroke-width="1.3"/></svg>


<!-- ===== Dialog ===== -->
<div class="a" style="left:0;top:21px;width:680px;height:480px;background:#b0cae6;border-top:1px solid #94a6b8;border-bottom:1px solid #8ba4c2"></div>
<div class="a" style="left:0;top:495px;width:680px;height:6px;background:linear-gradient(#b0cae6,#9db4d4)"></div>
<div class="a" style="left:5px;top:52px;width:667px;height:441px;background:#f0f0f0"></div>
<div class="t" style="left:291px;top:28px;font-size:15px;color:#3a4a5e">Guardar como</div>
<div class="a" style="left:642px;top:22px;width:31px;height:20px;background:#c7423b"></div>
<div class="t" style="left:651px;top:25px;font-size:13px;color:#fff">&#x2715;</div>


<!-- dialog content -->
<div class="a" style="left:5px;top:52px;width:667px;height:34px;background:#fff"></div>
<div class="a" style="left:5px;top:87px;width:667px;height:33px;background:linear-gradient(#fdfdfd,#f5f6f8 8px,#f5f6f8 26px,#ebebec 32px,#e6e6e6)"></div>
<!-- nav buttons -->
<svg class="a" style="left:14px;top:59px" width="52" height="22" viewBox="0 0 52 22">
 <circle cx="11" cy="11" r="8.5" fill="none" stroke="#d8d8d8" stroke-width="1.6"/>
 <path d="M15 11H7M10 8L7 11L10 14" fill="none" stroke="#d4d4d4" stroke-width="1.6"/>
 <circle cx="39" cy="11" r="8.5" fill="none" stroke="#d8d8d8" stroke-width="1.6"/>
 <path d="M35 11H43M40 8L43 11L40 14" fill="none" stroke="#d4d4d4" stroke-width="1.6"/>
</svg>
<div class="a" style="left:74px;top:69px;width:6px;height:1px;background:#d8d8d8"></div>
<svg class="a" style="left:93px;top:61px" width="14" height="18" viewBox="0 0 14 18">
 <path d="M7 17V3M2 8L7 3L12 8" fill="none" stroke="#555" stroke-width="1.8"/>
</svg>
<!-- address bar -->
<div class="a" style="left:112px;top:59px;width:334px;height:22px;background:#fff;border:1px solid #dadada"></div>
<div class="a" style="left:420px;top:60px;width:1px;height:20px;background:#e2e2e2"></div>
<svg class="a" style="left:116px;top:61px" width="16" height="17" viewBox="0 0 16 17">
 <path d="M1 3h5l1 2h8v11H1z" fill="#e9d77a"/><path d="M1 5h14v11H1z" fill="#f4e6a0"/><path d="M6 2v14" stroke="#c9b24a" stroke-width="1.5"/>
</svg>
<div class="t" style="left:137px;top:64px;font-size:11px;color:#555">&#171;</div>
<div class="t" style="left:153px;top:63px;font-size:11.2px;color:#1e1e1e">Taller 20_21</div>
<svg class="a" style="left:223px;top:66px" width="6" height="8"><path d="M1 0L5 4L1 8z" fill="#555"/></svg>
<div class="t" style="left:237px;top:63px;font-size:11.2px;color:#1e1e1e">SEMANA 21</div>
<svg class="a" style="left:405px;top:65px" width="12" height="9"><path d="M1.5 2L6 6.5L10.5 2" fill="none" stroke="#444" stroke-width="1.8"/></svg>
<svg class="a" style="left:426px;top:62px" width="15" height="15" viewBox="0 0 15 15"><path d="M11.5 7.5A4.2 4.2 0 1 1 9.6 4" fill="none" stroke="#666" stroke-width="1.8"/><path d="M8 1.5L12 3.5L9.5 7z" fill="#666"/></svg>
<!-- search -->
<div class="a" style="left:459px;top:59px;width:201px;height:22px;background:#fff;border:1px solid #dadada"></div>
<div class="t" style="left:467px;top:64px;font-size:11.5px;color:#7a7a7a">Buscar en SEMANA 21</div>
<svg class="a" style="left:639px;top:63px" width="14" height="14" viewBox="0 0 14 14"><circle cx="8.5" cy="5.5" r="3.6" fill="none" stroke="#555" stroke-width="1.6"/><path d="M6 8L2 12" stroke="#555" stroke-width="2"/></svg>

<!-- toolbar -->
<div class="t" style="left:23px;top:97px;font-size:12px;color:#2a3038">Organizar</div>
<svg class="a" style="left:79px;top:101px" width="9" height="6"><path d="M0 0h9L4.5 5z" fill="#333"/></svg>
<div class="t" style="left:118px;top:97px;font-size:12px;color:#2a3038">Nueva carpeta</div>
<svg class="a" style="left:579px;top:97px" width="14" height="12" viewBox="0 0 14 12"><rect x="0.5" y="0.5" width="13" height="11" fill="#dfe8f2" stroke="#6c8cb0"/><rect x="2" y="5" width="10" height="5" fill="#3b6aa3"/></svg>
<svg class="a" style="left:602px;top:101px" width="9" height="6"><path d="M0 0h9L4.5 5z" fill="#333"/></svg>
<svg class="a" style="left:640px;top:95px" width="17" height="17" viewBox="0 0 17 17"><circle cx="8.5" cy="8.5" r="7.5" fill="#3e6fc2" stroke="#1f4a99"/><text x="8.5" y="13" font-size="11" font-weight="bold" text-anchor="middle" fill="#fff" font-family="Liberation Sans">?</text></svg>

<!-- browse area -->
<div class="a" style="left:5px;top:120px;width:667px;height:256px;background:#fff"></div>


<!-- nav tree -->
<div class="a" style="left:7px;top:129px;width:138px;height:20px;background:#f3f3f3;border:1px solid #e6e6e6"></div>
<svg class="a" style="left:24px;top:130px" width="17" height="17" viewBox="0 0 17 17"><path d="M8.5 1L10.7 6L16 6.5L12 10L13.2 15.5L8.5 12.6L3.8 15.5L5 10L1 6.5L6.3 6z" fill="#f5c542" stroke="#d9a21c" stroke-width="0.8"/></svg>
<div class="t" style="left:46px;top:134px;font-size:11.5px;color:#1e1e1e">Favoritos</div>
<!-- Descargas -->
<svg class="a" style="left:35px;top:152px" width="16" height="17" viewBox="0 0 16 17"><path d="M1 2h6v13H1z" fill="#e8d275"/><path d="M1 4h13v11H1z" fill="#f1e29b"/><path d="M5 1.5v14" stroke="#d1b84c" stroke-width="1.4"/><path d="M9 7v5M6.5 10l2.5 3 2.5-3" fill="none" stroke="#2f7fd1" stroke-width="2"/></svg>
<div class="t" style="left:56px;top:155px;font-size:11.5px;color:#1e1e1e">Descargas</div>
<svg class="a" style="left:36px;top:173px" width="14" height="17" viewBox="0 0 14 17"><path d="M1.5 1.5h8l3 3v11h-11z" fill="#fff" stroke="#b8b8b8"/></svg>
<div class="t" style="left:56px;top:176px;font-size:11.5px;color:#1e1e1e">Dropbox</div>
<svg class="a" style="left:35px;top:196px" width="16" height="13" viewBox="0 0 16 13"><rect x="0.5" y="0.5" width="15" height="12" fill="#3c6fc4" stroke="#2a4e8e"/><rect x="2" y="2" width="12" height="8" fill="#4c84d6"/></svg>
<div class="t" style="left:56px;top:197px;font-size:11.5px;color:#1e1e1e">Escritorio</div>
<svg class="a" style="left:36px;top:215px" width="14" height="17" viewBox="0 0 14 17"><path d="M1.5 1.5h8l3 3v11h-11z" fill="#fff" stroke="#b8b8b8"/></svg>
<div class="t" style="left:56px;top:218px;font-size:11.5px;color:#1e1e1e">Google Drive</div>
<svg class="a" style="left:35px;top:236px" width="16" height="17" viewBox="0 0 16 17"><rect x="1" y="2" width="13" height="13" fill="#e7ecef" stroke="#9aa5ad"/><path d="M3 5h4M3 8h7M3 11h5" stroke="#7b8a95" stroke-width="1.2"/></svg>
<div class="t" style="left:56px;top:239px;font-size:11.5px;color:#1e1e1e">Sitios recientes</div>
<svg class="a" style="left:35px;top:257px" width="16" height="17" viewBox="0 0 16 17"><path d="M1 2h6v13H1z" fill="#e8d275"/><path d="M1 4h13v11H1z" fill="#f1e29b"/><path d="M5 1.5v14" stroke="#d1b84c" stroke-width="1.4"/></svg>
<div class="t" style="left:56px;top:260px;font-size:11.5px;color:#1e1e1e">SkyDrive</div>
<svg class="a" style="left:23px;top:298px" width="18" height="18" viewBox="0 0 18 18"><circle cx="5" cy="10" r="4" fill="#3f86d9"/><circle cx="12" cy="6" r="4" fill="#45a445"/><circle cx="12" cy="13" r="4" fill="#2f5ea8"/></svg>
<div class="t" style="left:46px;top:302px;font-size:11.5px;color:#1e1e1e">Grupo en el hogar</div>
<svg class="a" style="left:25px;top:341px" width="18" height="16" viewBox="0 0 18 16"><rect x="4" y="1" width="13" height="10" fill="#2c54b8" stroke="#555" stroke-width="0.8"/><rect x="0" y="5" width="3" height="10" fill="#999"/><rect x="7" y="12" width="7" height="2" fill="#888"/></svg>
<div class="t" style="left:46px;top:344px;font-size:11.5px;color:#1e1e1e">Este equipo</div>
<svg class="a" style="left:35px;top:361px" width="16" height="15" viewBox="0 0 16 15"><path d="M1 2h6v13H1z" fill="#e8d275"/><path d="M1 4h13v11H1z" fill="#f1e29b"/><path d="M5 1.5v14" stroke="#d1b84c" stroke-width="1.4"/><circle cx="10" cy="11" r="3" fill="#2f7fd1"/></svg>
<div class="t" style="left:56px;top:365px;font-size:11.5px;color:#1e1e1e;height:11px;overflow:hidden">Descargas</div>
<!-- tree scrollbar -->
<div class="a" style="left:147px;top:120px;width:14px;height:256px;background:#f0f0f0"></div>
<div class="a" style="left:147px;top:137px;width:14px;height:121px;background:#cdcdcd"></div>
<svg class="a" style="left:149px;top:124px" width="10" height="7"><path d="M1 5.5L5 1.5L9 5.5" fill="none" stroke="#555" stroke-width="1.6"/></svg>
<svg class="a" style="left:149px;top:364px" width="10" height="7"><path d="M1 1.5L5 5.5L9 1.5" fill="none" stroke="#555" stroke-width="1.6"/></svg>
<!-- file list scrollbar -->
<div class="a" style="left:656px;top:120px;width:16px;height:256px;background:#f0f0f0"></div>
<div class="a" style="left:656px;top:137px;width:15px;height:209px;background:#cdcdcd"></div>
<svg class="a" style="left:659px;top:124px" width="10" height="7"><path d="M1 5.5L5 1.5L9 5.5" fill="none" stroke="#555" stroke-width="1.6"/></svg>
<svg class="a" style="left:659px;top:364px" width="10" height="7"><path d="M1 1.5L5 5.5L9 1.5" fill="none" stroke="#555" stroke-width="1.6"/></svg>


<!-- files -->
<svg class="a" style="left:198px;top:134px" width="66" height="84" viewBox="0 0 66 84">
 <defs><linearGradient id="dg198134" x1="0" y1="0" x2="0" y2="1"><stop offset="0" stop-color="#f7f7f7"/><stop offset="1" stop-color="#e9e9e9"/></linearGradient></defs>
 <path d="M0.5 0.5H49L65.5 16V83.5H0.5z" fill="url(#dg198134)" stroke="#d6d6d6"/>
 <path d="M49 0.5V16H65.5" fill="#fafafa" stroke="#dcdcdc"/>
 <g>
 <rect x="10" y="25" width="30" height="33" fill="#3a3a3a"/>
 <rect x="15" y="26" width="20" height="31" fill="#3f8fd6"/>
 <rect x="15" y="40" width="8" height="8" fill="#b8283a"/>
 <path d="M24 34C26 30 31 30 32 34L30 42H26z" fill="#2a2a28"/><path d="M26 36L28 32L30 36L28 41z" fill="#e0a020"/>
 <rect x="15" y="48" width="20" height="9" fill="#3a7ec4"/>
 <g fill="#d8e0e0"><rect x="11" y="27" width="3" height="2.5"/><rect x="11" y="32" width="3" height="2.5"/><rect x="11" y="37" width="3" height="2.5"/><rect x="11" y="42" width="3" height="2.5"/><rect x="11" y="47" width="3" height="2.5"/><rect x="11" y="52" width="3" height="2.5"/>
 <rect x="36" y="27" width="3" height="2.5"/><rect x="36" y="32" width="3" height="2.5"/><rect x="36" y="37" width="3" height="2.5"/><rect x="36" y="42" width="3" height="2.5"/><rect x="36" y="47" width="3" height="2.5"/><rect x="36" y="52" width="3" height="2.5"/></g>
 <path d="M45 21C47 29 58 33 59 43C60 49 57 53 53 56C55 49 53 43 50 41V55H45z" fill="#2a86dc"/>
 <ellipse cx="38" cy="57" rx="12.5" ry="8.5" transform="rotate(-25 38 57)" fill="#2a86dc"/>
 <path d="M46.5 23V50" stroke="#74bef7" stroke-width="1.5"/><path d="M30 57C33 52 38 51 42 52" stroke="#86c8f8" stroke-width="1.6" fill="none"/>
</g>
</svg><svg class="a" style="left:436px;top:134px" width="66" height="84" viewBox="0 0 66 84">
 <defs><linearGradient id="dg436134" x1="0" y1="0" x2="0" y2="1"><stop offset="0" stop-color="#f7f7f7"/><stop offset="1" stop-color="#e9e9e9"/></linearGradient></defs>
 <path d="M0.5 0.5H49L65.5 16V83.5H0.5z" fill="url(#dg436134)" stroke="#d6d6d6"/>
 <path d="M49 0.5V16H65.5" fill="#fafafa" stroke="#dcdcdc"/>
 <g>
 <rect x="10" y="25" width="30" height="33" fill="#3a3a3a"/>
 <rect x="15" y="26" width="20" height="31" fill="#3f8fd6"/>
 <rect x="15" y="40" width="8" height="8" fill="#b8283a"/>
 <path d="M24 34C26 30 31 30 32 34L30 42H26z" fill="#2a2a28"/><path d="M26 36L28 32L30 36L28 41z" fill="#e0a020"/>
 <rect x="15" y="48" width="20" height="9" fill="#3a7ec4"/>
 <g fill="#d8e0e0"><rect x="11" y="27" width="3" height="2.5"/><rect x="11" y="32" width="3" height="2.5"/><rect x="11" y="37" width="3" height="2.5"/><rect x="11" y="42" width="3" height="2.5"/><rect x="11" y="47" width="3" height="2.5"/><rect x="11" y="52" width="3" height="2.5"/>
 <rect x="36" y="27" width="3" height="2.5"/><rect x="36" y="32" width="3" height="2.5"/><rect x="36" y="37" width="3" height="2.5"/><rect x="36" y="42" width="3" height="2.5"/><rect x="36" y="47" width="3" height="2.5"/><rect x="36" y="52" width="3" height="2.5"/></g>
 <path d="M45 21C47 29 58 33 59 43C60 49 57 53 53 56C55 49 53 43 50 41V55H45z" fill="#2a86dc"/>
 <ellipse cx="38" cy="57" rx="12.5" ry="8.5" transform="rotate(-25 38 57)" fill="#2a86dc"/>
 <path d="M46.5 23V50" stroke="#74bef7" stroke-width="1.5"/><path d="M30 57C33 52 38 51 42 52" stroke="#86c8f8" stroke-width="1.6" fill="none"/>
</g>
</svg><svg class="a" style="left:198px;top:266px" width="66" height="84" viewBox="0 0 66 84">
 <defs><linearGradient id="dg198266" x1="0" y1="0" x2="0" y2="1"><stop offset="0" stop-color="#f7f7f7"/><stop offset="1" stop-color="#e9e9e9"/></linearGradient></defs>
 <path d="M0.5 0.5H49L65.5 16V83.5H0.5z" fill="url(#dg198266)" stroke="#d6d6d6"/>
 <path d="M49 0.5V16H65.5" fill="#fafafa" stroke="#dcdcdc"/>
 
</svg><svg class="a" style="left:303px;top:164px" width="92" height="56" viewBox="0 0 92 56">
 <rect x="0" y="0" width="92" height="56" fill="#1e2220"/>
 <rect x="0" y="0" width="10" height="56" fill="#3c4644"/><rect x="82" y="0" width="10" height="56" fill="#3c4644"/>
 <rect x="2.5" y="4.0" width="5" height="4.5" fill="#ededed"/><rect x="84.5" y="4.0" width="5" height="4.5" fill="#ededed"/><rect x="2.5" y="12.6" width="5" height="4.5" fill="#ededed"/><rect x="84.5" y="12.6" width="5" height="4.5" fill="#ededed"/><rect x="2.5" y="21.2" width="5" height="4.5" fill="#ededed"/><rect x="84.5" y="21.2" width="5" height="4.5" fill="#ededed"/><rect x="2.5" y="29.8" width="5" height="4.5" fill="#ededed"/><rect x="84.5" y="29.8" width="5" height="4.5" fill="#ededed"/><rect x="2.5" y="38.4" width="5" height="4.5" fill="#ededed"/><rect x="84.5" y="38.4" width="5" height="4.5" fill="#ededed"/><rect x="2.5" y="47.0" width="5" height="4.5" fill="#ededed"/><rect x="84.5" y="47.0" width="5" height="4.5" fill="#ededed"/>
 <defs><linearGradient id="flA" x1="0" y1="0" x2="1" y2="0"><stop offset="0" stop-color="#7b8a66"/><stop offset="0.55" stop-color="#55664a"/><stop offset="1" stop-color="#1f3424"/></linearGradient>
 <radialGradient id="flB" cx="0.2" cy="0.15" r="0.35"><stop offset="0" stop-color="#8fb86a"/><stop offset="1" stop-color="#8fb86a" stop-opacity="0"/></radialGradient></defs>
 <rect x="9" y="3" width="74" height="50" fill="url(#flA)"/>
 <rect x="9" y="3" width="74" height="50" fill="url(#flB)"/>
 <path d="M9 38C30 34 50 36 60 40V53H9z" fill="#4a5e3e" opacity="0.8"/>
 <path d="M62 3H83V53H60z" fill="#243a26" opacity="0.85"/>
 <path d="M14 26C22 18 36 16 46 20C52 23 58 26 62 30C54 30 46 32 40 34C30 36 20 34 14 26z" fill="#c9c0b6"/>
 <path d="M36 20C34 14 35 10 39 10C42 10 43 13 41 15" fill="none" stroke="#d8d0c6" stroke-width="2.4"/>
 <path d="M40 34L42 50M46 33L47 50" stroke="#a8a096" stroke-width="1.3"/>
 <g stroke="#7f9a70" stroke-width="0.7" opacity="0.7"><path d="M50 36H66M48 40H64M52 44H68"/></g>
 <rect x="73" y="40" width="19" height="16" fill="#a6c6de"/>
 <rect x="74.5" y="41.5" width="14" height="13" fill="#e4a874"/>
 <path d="M78.5 43.5L86 48L78.5 52.5z" fill="#fff"/>
</svg><svg class="a" style="left:303px;top:296px" width="92" height="56" viewBox="0 0 92 56">
 <rect x="0" y="0" width="92" height="56" fill="#1e2220"/>
 <rect x="0" y="0" width="10" height="56" fill="#3c4644"/><rect x="82" y="0" width="10" height="56" fill="#3c4644"/>
 <rect x="2.5" y="4.0" width="5" height="4.5" fill="#ededed"/><rect x="84.5" y="4.0" width="5" height="4.5" fill="#ededed"/><rect x="2.5" y="12.6" width="5" height="4.5" fill="#ededed"/><rect x="84.5" y="12.6" width="5" height="4.5" fill="#ededed"/><rect x="2.5" y="21.2" width="5" height="4.5" fill="#ededed"/><rect x="84.5" y="21.2" width="5" height="4.5" fill="#ededed"/><rect x="2.5" y="29.8" width="5" height="4.5" fill="#ededed"/><rect x="84.5" y="29.8" width="5" height="4.5" fill="#ededed"/><rect x="2.5" y="38.4" width="5" height="4.5" fill="#ededed"/><rect x="84.5" y="38.4" width="5" height="4.5" fill="#ededed"/><rect x="2.5" y="47.0" width="5" height="4.5" fill="#ededed"/><rect x="84.5" y="47.0" width="5" height="4.5" fill="#ededed"/>
 <defs><radialGradient id="frA" cx="0.75" cy="0.4" r="0.7"><stop offset="0" stop-color="#92ae78"/><stop offset="0.6" stop-color="#5e7a4a"/><stop offset="1" stop-color="#2e4228"/></radialGradient>
 <radialGradient id="frB" cx="0.45" cy="0.45" r="0.55"><stop offset="0" stop-color="#9a7010"/><stop offset="0.15" stop-color="#e8a818"/><stop offset="0.5" stop-color="#f6bc28"/><stop offset="0.85" stop-color="#f0a81a"/><stop offset="1" stop-color="#d89010"/></radialGradient></defs>
 <rect x="9" y="3" width="74" height="50" fill="url(#frA)"/>
 <path d="M58 8C68 10 78 18 82 30L80 44C70 40 62 30 58 8z" fill="#8aa870" opacity="0.8"/>
 <path d="M9 44C20 46 40 50 60 53H9z" fill="#26341f"/>
 <ellipse cx="36" cy="29" rx="23" ry="23" fill="url(#frB)"/>
 <path d="M50 14C56 18 60 26 58 36" stroke="#f2a818" stroke-width="4" fill="none" opacity="0.8"/>
 <rect x="73" y="40" width="19" height="16" fill="#a6c6de"/>
 <rect x="74.5" y="41.5" width="14" height="13" fill="#e4a874"/>
 <path d="M78.5 43.5L86 48L78.5 52.5z" fill="#fff"/>
</svg><div class="a" style="left:541px;top:128px;width:95px;height:96px;background:#fff;border:1px solid #ececec"></div>
<svg class="a" style="left:560px;top:152px" width="60" height="54" viewBox="0 0 60 54">
 <defs><linearGradient id="wg" x1="0" y1="0" x2="0" y2="1"><stop offset="0" stop-color="#a4cc30"/><stop offset="1" stop-color="#86b21c"/></linearGradient></defs>
 <path d="M12 4L46 19L12 35z" fill="url(#wg)"/>
 <path d="M12 35L46 19L46 21z" fill="#6d9414"/>
 <text x="29" y="49" text-anchor="middle" font-family="Liberation Sans" font-weight="bold" font-size="15" fill="#111" letter-spacing="-0.5">web<tspan fill="#8ab820" font-size="9" dy="-3">•</tspan><tspan dy="3">m</tspan></text>
</svg>
<div class="t" style="left:231px;top:226px;font-size:11.5px;color:#1e1e1e;transform:translateX(-50%)">Fall - 23881</div>
<div class="t" style="left:350px;top:226px;font-size:11.5px;color:#1e1e1e;transform:translateX(-50%)">Flamingo - 15922</div>
<div class="t" style="left:469px;top:226px;font-size:11.5px;color:#1e1e1e;transform:translateX(-50%)">Ranunculus -</div>
<div class="t" style="left:469px;top:241px;font-size:11.5px;color:#1e1e1e;transform:translateX(-50%)">22634</div>
<div class="t" style="left:588px;top:226px;font-size:11.5px;color:#1e1e1e;transform:translateX(-50%)">Semana 21</div>
<div class="t" style="left:231px;top:358px;font-size:11.5px;color:#1e1e1e;transform:translateX(-50%)">Semana21.kdenli</div>
<div class="t" style="left:350px;top:358px;font-size:11.5px;color:#1e1e1e;transform:translateX(-50%)">Semana21_2</div>


<!-- bottom fields -->

<div class="t" style="left:78px;top:392px;font-size:11.5px;color:#1e1e1e">Nombre:</div>
<div class="a" style="left:130px;top:386px;width:537px;height:23px;background:#fff;border:1px solid #7eabd9"></div>
<div class="a" style="left:469px;top:342px;width:2px;height:59px;background:linear-gradient(#e8e8e8,#6a6a6a 12px,#6a6a6a);"></div>
<div class="a" style="left:250px;top:399px;width:221px;height:2px;background:linear-gradient(90deg,#dcdcdc,#6a6a6a 14px,#6a6a6a)"></div>
<div class="a" style="left:136px;top:390px;width:1px;height:14px;background:#111"></div>
<svg class="a" style="left:653px;top:393px" width="11" height="8"><path d="M1.5 1.5L5.5 5.5L9.5 1.5" fill="none" stroke="#333" stroke-width="1.8"/></svg>
<div class="t" style="left:98px;top:418px;font-size:11.5px;color:#1e1e1e">Tipo:</div>
<div class="a" style="left:130px;top:412px;width:537px;height:22px;background:linear-gradient(#eeeeee,#e3e3e3);border:1px solid #cccccc"></div>
<svg class="a" style="left:653px;top:418px" width="11" height="8"><path d="M1.5 1.5L5.5 5.5L9.5 1.5" fill="none" stroke="#333" stroke-width="1.8"/></svg>
<svg class="a" style="left:16px;top:462px" width="17" height="17" viewBox="0 0 17 17"><circle cx="8.5" cy="8.5" r="7.5" fill="#f4f4f4" stroke="#cfcfcf"/><path d="M4.5 10.5L8.5 6.5L12.5 10.5z" fill="#555"/></svg>
<div class="t" style="left:37px;top:465px;font-size:11.5px;color:#1e1e1e">Ocultar carpetas</div>
<!-- buttons -->
<div class="a" style="left:468px;top:456px;width:86px;height:24px;background:linear-gradient(#eaf3fb,#dde9f5);border:1px solid #6fa2d6"></div>
<div class="t" style="left:511px;top:462px;font-size:11.5px;color:#1e1e1e;transform:translateX(-50%)">Guardar</div>
<div class="a" style="left:568px;top:456px;width:86px;height:24px;background:linear-gradient(#f2f2f2,#e4e4e4);border:1px solid #acacac"></div>
<div class="t" style="left:611px;top:462px;font-size:11.5px;color:#1e1e1e;transform:translateX(-50%)">Cancelar</div>
<svg class="a" style="left:660px;top:482px" width="10" height="10"><g fill="#c8c8c8"><rect x="7" y="1" width="2" height="2"/><rect x="4" y="4" width="2" height="2"/><rect x="7" y="4" width="2" height="2"/><rect x="1" y="7" width="2" height="2"/><rect x="4" y="7" width="2" height="2"/><rect x="7" y="7" width="2" height="2"/></g></svg>
<!-- title icon -->
<svg class="a" style="left:8px;top:29px" width="16" height="14" viewBox="0 0 16 14"><path d="M1 5h7M1 7.5h7M1 10h7" stroke="#7a90a8" stroke-width="1.2"/><path d="M7 2L14 7L7 12z" fill="#4d6684"/></svg>
<svg class="a" style="left:0px;top:3px" width="16" height="14" viewBox="0 0 16 14"><path d="M0 5h7M0 7.5h7M0 10h7" stroke="#7a90a8" stroke-width="1.2"/><path d="M6 2L13 7L6 12z" fill="#4d6684"/></svg>
<!-- yellow highlight + cursor -->
<div class="a" style="left:438px;top:436px;width:74px;height:72px;border:4.5px solid #eef53c;border-radius:50%"></div>
<svg class="a" style="left:472px;top:470px" width="14" height="22" viewBox="0 0 14 22"><path d="M1 1V17L5 13.5L8 20L10.5 19L7.5 12.5H12.5z" fill="#fff" stroke="#111" stroke-width="1.1"/></svg>


<!-- watermark -->
<div class="t" style="left:16px;top:705px;font-size:13.5px;font-weight:bold;color:#fff;letter-spacing:-0.6px;text-shadow:1px 1px 0 #333,2px 2px 1px #555;transform:scaleX(0.89);transform-origin:left">RECORDED WITH</div>
<div class="t" style="left:17px;top:727px;font-size:17.5px;font-weight:bold;color:#fff;letter-spacing:-0.4px;text-shadow:1px 1px 0 #333,2px 2px 1px #555">SCREENCAST</div>
<div class="a" style="left:138px;top:718px;width:34px;height:34px;border-radius:50%;border:4px solid #5d7b90;background:#eef2f5;box-shadow:1px 1px 1px #777"></div>
<div class="a" style="left:149px;top:729px;width:12px;height:12px;border-radius:50%;background:#3d8ad2"></div>
<div class="t" style="left:177px;top:727px;font-size:17.5px;font-weight:bold;color:#fff;letter-spacing:-0.4px;text-shadow:1px 1px 0 #333,2px 2px 1px #555">MATIC</div>

</body></html>
